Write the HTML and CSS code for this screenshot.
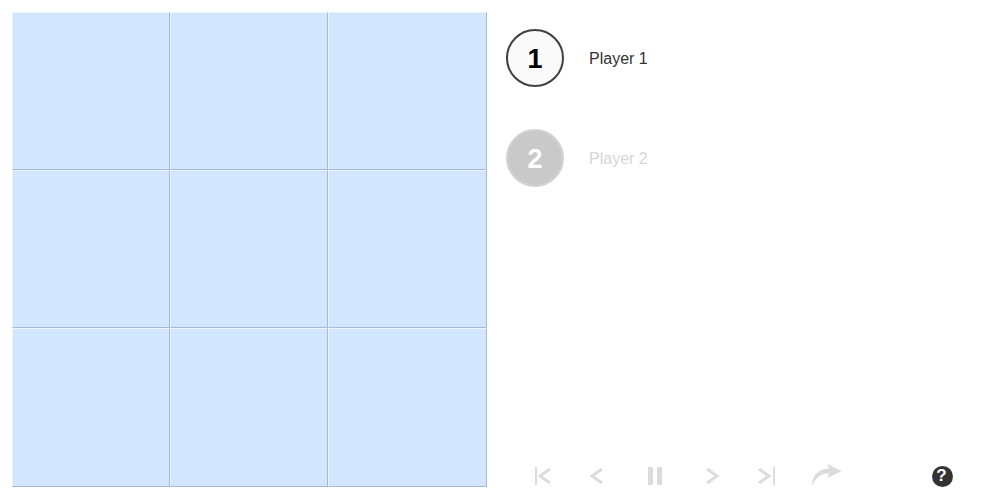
FILE: index.html
```html
<!DOCTYPE html>
<html lang="en">
<head>
<meta charset="utf-8">
<title>Game board</title>
<link rel="stylesheet" href="styles.css">
</head>
<body>
<main class="game">
  <div class="board">
    <button class="cell" aria-label="Row 1, column 1"></button>
    <button class="cell" aria-label="Row 1, column 2"></button>
    <button class="cell" aria-label="Row 1, column 3"></button>
    <button class="cell" aria-label="Row 2, column 1"></button>
    <button class="cell" aria-label="Row 2, column 2"></button>
    <button class="cell" aria-label="Row 2, column 3"></button>
    <button class="cell" aria-label="Row 3, column 1"></button>
    <button class="cell" aria-label="Row 3, column 2"></button>
    <button class="cell" aria-label="Row 3, column 3"></button>
  </div>
  <section class="side">
    <ul class="players">
      <li class="player player-first"><span class="badge">1</span><span class="name">Player 1</span></li>
      <li class="player player-second"><span class="badge">2</span><span class="name">Player 2</span></li>
    </ul>
    <nav class="controls">
      <button class="control" aria-label="First move"><svg class="icon" viewBox="0 0 56 24"><path class="fill" d="M20 3h2v18h-2z"/><path class="line" d="M35 5L25 12L35 19"/></svg></button>
      <button class="control" aria-label="Previous move"><svg class="icon" viewBox="0 0 56 24"><path class="line" d="M31 5L21 12L31 19"/></svg></button>
      <button class="control" aria-label="Pause"><svg class="icon" viewBox="0 0 56 24"><path class="fill" d="M21 3h5v18h-5zM30 3h5v18h-5z"/></svg></button>
      <button class="control" aria-label="Next move"><svg class="icon" viewBox="0 0 56 24"><path class="line" d="M24 5L34 12L24 19"/></svg></button>
      <button class="control" aria-label="Last move"><svg class="icon" viewBox="0 0 56 24"><path class="line" d="M20 5L30 12L20 19"/><path class="fill" d="M34 3h2v18h-2z"/></svg></button>
      <button class="control" aria-label="Skip turn"><svg class="icon" viewBox="0 0 56 24"><path class="fill" d="M17 21.500C17 12 23 4.800 34 4.600L32.200 0L46.800 7L32.200 14L34 9.500C26 9.200 20.500 14 17 21.500z"/></svg></button>
      <button class="control help" aria-label="Help"><span class="help-mark">?</span></button>
    </nav>
  </section>
</main>
</body>
</html>
```
FILE: styles.css
```css
* {
  box-sizing: border-box;
}

body {
  margin: 0;
  background: #fff;
  color: #333;
  font: 16px/20px "Liberation Sans", Arial, sans-serif;
}

button {
  margin: 0;
  padding: 0;
  border: 0;
  background: none;
  font: inherit;
}

.game {
  display: flex;
  align-items: stretch;
  min-height: 100vh;
  padding: 12px;
  gap: 19px;
}

.board {
  display: grid;
  flex: none;
  align-self: flex-start;
  grid-template-columns: 158fr 158fr 159fr;
  grid-template-rows: 158fr 158fr 159fr;
  width: calc(100vh - 25px);
  aspect-ratio: 1;
}

.cell {
  border: 1px solid;
  border-color: #ebf4ff #a4bad6 #a4bad6 #ebf4ff;
  background: #d2e6ff;
}

.side {
  display: flex;
  flex: 1;
  flex-direction: column;
  justify-content: space-between;
}

.players {
  display: flex;
  flex-direction: column;
  gap: 42px;
  margin: 0;
  padding: 17px 0 0;
  list-style: none;
}

.player {
  display: flex;
  align-items: center;
  gap: 25px;
}

.name {
  padding-top: 2px;
}

.badge {
  display: flex;
  align-items: center;
  justify-content: center;
  width: 58px;
  height: 58px;
  padding-top: 2px;
  border: 2px solid #404040;
  border-radius: 50%;
  background: #fafafa;
  color: #000;
  font-size: 27px;
  font-weight: bold;
}

.player-second .badge {
  border-color: #d3d3d3;
  background: #c9c9c9;
  color: #fff;
}

.player-second .name {
  color: #d6d6d6;
}

.controls {
  display: flex;
  padding: 0 18px 0 9px;
}

.control {
  width: 56px;
  height: 24px;
}

.icon {
  display: block;
  width: 56px;
  height: 24px;
}

.fill {
  fill: #dcdcdc;
}

.line {
  fill: none;
  stroke: #dcdcdc;
  stroke-width: 3;
}

.help {
  display: flex;
  align-items: center;
  justify-content: center;
  margin-left: auto;
}

.help-mark {
  width: 21px;
  height: 21px;
  padding-right: 1px;
  border-radius: 50%;
  background: #333;
  color: #fff;
  font-size: 17px;
  font-weight: bold;
  line-height: 20px;
}
```
